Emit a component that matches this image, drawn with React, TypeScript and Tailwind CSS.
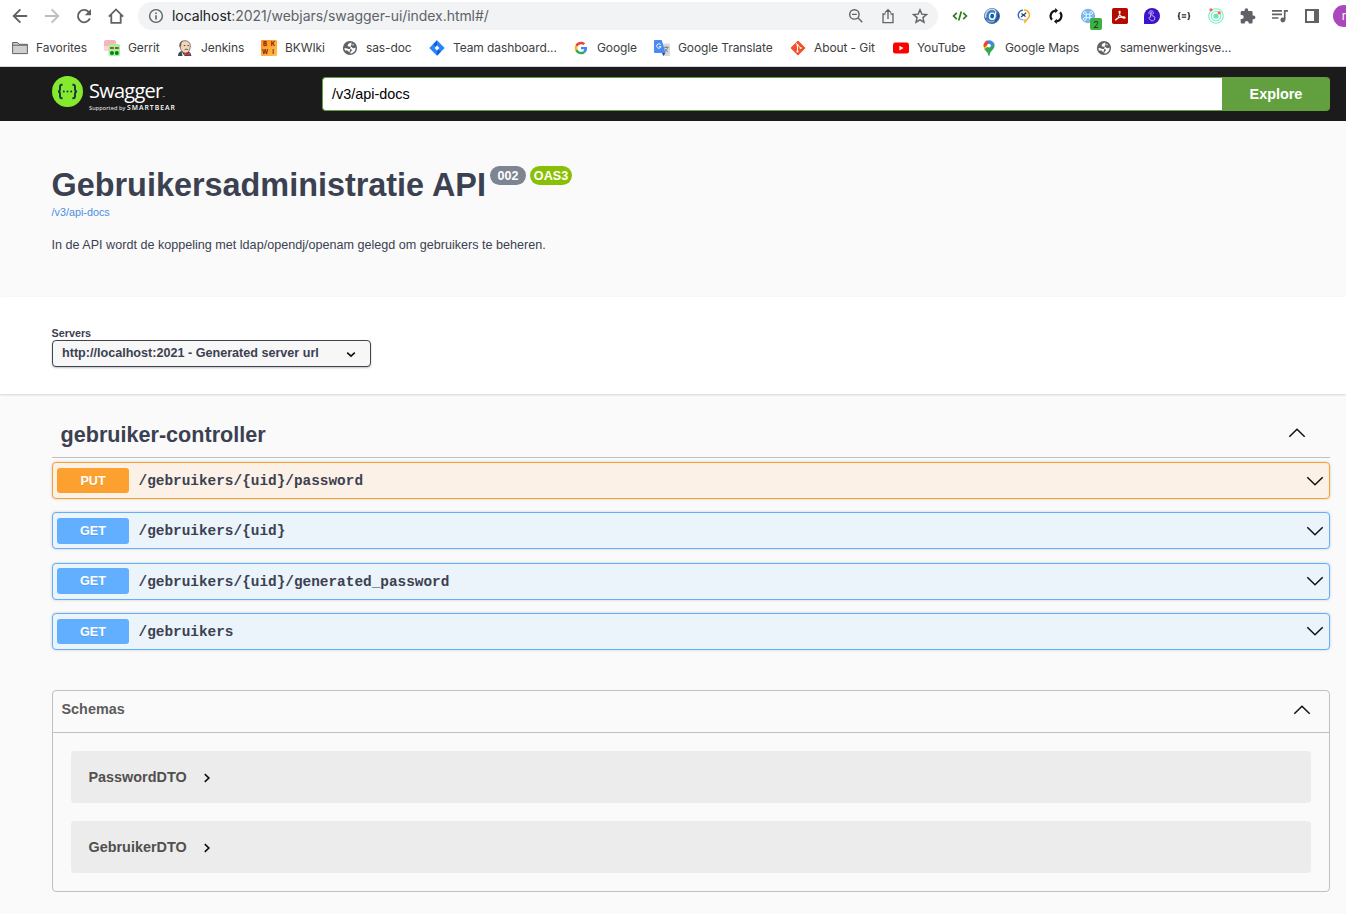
import type { ReactNode } from "react";

function Svg({ children, size = 16, vb = "0 0 16 16" }: { children: ReactNode; size?: number; vb?: string }) {
  return (
    <svg width={size} height={size} viewBox={vb} fill="none" className="block shrink-0">
      {children}
    </svg>
  );
}

const GRAY = "#5f6368";

const BackIcon = ({ color = GRAY }: { color?: string }) => (
  <Svg>
    <path d="M15.2 8H2M8.4 1.3 1.7 8l6.7 6.7" stroke={color} strokeWidth="1.9" />
  </Svg>
);
const ForwardIcon = () => (
  <Svg>
    <path d="M.8 8H14M7.6 1.3 14.3 8l-6.7 6.7" stroke="#bcbec0" strokeWidth="1.9" />
  </Svg>
);
const ReloadIcon = () => (
  <Svg>
    <path d="M13.9 10.4A6.2 6.2 0 1 1 12.6 3.8L14 5.4" stroke={GRAY} strokeWidth="1.9" />
    <path d="M15 1v6.3H8.8z" fill={GRAY} />
  </Svg>
);
const HomeIcon = () => (
  <Svg>
    <path d="M.8 8.6 8 1.4l7.2 7.2M3.3 7v7.9h9.4V7" stroke={GRAY} strokeWidth="1.8" />
  </Svg>
);
const InfoIcon = () => (
  <Svg>
    <circle cx="8" cy="8" r="6.4" stroke={GRAY} strokeWidth="1.4" />
    <path d="M8 7.2v4.2M8 4.5v1.5" stroke={GRAY} strokeWidth="1.6" />
  </Svg>
);
const ZoomOutIcon = () => (
  <Svg>
    <circle cx="6.4" cy="6.4" r="4.7" stroke={GRAY} strokeWidth="1.4" />
    <path d="M9.8 9.8 14.3 14.3M4 6.4h4.8" stroke={GRAY} strokeWidth="1.4" />
  </Svg>
);
const ShareIcon = () => (
  <Svg>
    <path d="M5.5 6H3v8.6h10V6h-2.5M8 11V1.8M5 4.6l3-3 3 3" stroke={GRAY} strokeWidth="1.3" />
  </Svg>
);
const StarIcon = () => (
  <Svg>
    <path d="m8 1.8 1.8 4.3 4.7.4-3.6 3.1 1.1 4.6L8 11.8l-4 2.4 1.1-4.6-3.6-3.1 4.7-.4z" stroke={GRAY} strokeWidth="1.4" />
  </Svg>
);

const CodeIcon = () => (
  <Svg>
    <path d="M4.8 4.8 1.6 8l3.2 3.2M11.2 4.8 14.4 8l-3.2 3.2M9.3 3.6 6.7 12.6" stroke="#2e7d12" strokeWidth="1.7" />
  </Svg>
);
const SwirlIcon = () => (
  <Svg>
    <circle cx="8" cy="8" r="7.5" fill="#3f7cc4" stroke="#3a5f8c" strokeWidth=".9" />
    <path d="M1.8 9.5A6.3 6.3 0 0 1 11.5 2.6" stroke="#c2dcf5" strokeWidth="1.6" />
    <path d="M14.2 5.5c.6 4-1.4 7.5-5 8.6" stroke="#1d4f8f" strokeWidth="1.6" />
    <ellipse cx="8.2" cy="8.2" rx="2.7" ry="3.1" fill="#1f5aa5" stroke="#fff" strokeWidth="1.4" />
    <path d="M11.8 3.2c-.2 3-.6 5-2.2 8" stroke="#f0f7fd" strokeWidth="1.2" />
    <path d="M3.4 12.4c2 1.8 5.2 1.8 7.4.2" stroke="#8fbce8" strokeWidth="1.1" />
  </Svg>
);
const QuoteIcon = () => (
  <Svg>
    <path d="M3.6 10.6A5 5 0 0 1 7 2.2" stroke="#2c62cc" strokeWidth="1.3" />
    <path d="M8 2a5 5 0 0 1 3.6 8.8L9 13.8l-.2-2.3" stroke="#f5ae2c" strokeWidth="1.5" />
    <path d="M3.6 10.6c1 1 2.2 1.3 4 1.2" stroke="#8aa6da" strokeWidth="1.2" />
    <path d="m5.4 5.4 4.2 3.2M10.2 4.8 5 9" stroke="#30465f" strokeWidth="1.2" />
  </Svg>
);
const SyncIcon = () => (
  <Svg>
    <path d="M7.6 2.6A5.5 5.5 0 0 0 4 11.8M8.4 13.4A5.5 5.5 0 0 0 12 4.2" stroke="#111" strokeWidth="2.1" />
    <path d="M7.2 0v5.2L10 2.6zM8.8 16v-5.2L6 13.4z" fill="#111" />
  </Svg>
);
const CommandIcon = () => (
  <div className="relative h-4 w-4">
    <Svg>
      <circle cx="8" cy="8" r="7.2" fill="#79b7ee" />
      <path d="M6.2 9.8V5a1.4 1.4 0 1 0-1.4 1.4h6.4A1.4 1.4 0 1 0 9.8 5v6a1.4 1.4 0 1 0 1.4-1.4H4.8A1.4 1.4 0 1 0 6.2 11z" stroke="#e8f4ff" strokeWidth="1" />
    </Svg>
    <div className="absolute left-[10px] top-[10px] flex h-3 w-3 items-center justify-center rounded-[2px] bg-[#3cb043] text-[9px] leading-none text-[#162b17]">
      2
    </div>
  </div>
);
const AcrobatIcon = () => (
  <Svg>
    <rect width="16" height="16" rx="1.8" fill="#b30b00" />
    <path d="M3.4 11.8c1.2 1 4.8-4.7 4.7-8 0-.8-1-.8-1 .1.1 2.8 3 6.4 5.3 6.3 1.3-.2.8-1.2-.6-1.3-2.6-.2-8 1.4-8.4 2.9z" stroke="#fff" strokeWidth="1.1" />
  </Svg>
);
const HandIcon = () => (
  <Svg>
    <path d="M8 0a8 8 0 1 1 0 16H0V8a8 8 0 0 1 8-8z" fill="#3d14c9" />
    <path d="M6.6 9.2V4.9c0-1 1.3-1 1.3 0v2.8l2.3.7c.6.3.8.7.6 1.4l-.5 2.2c-.9 1.1-3.2 1.1-4 0L5 10.2c-.3-.8.5-1.4 1.1-.8zM5.2 6.2A2.3 2.3 0 1 1 9.4 5.8" stroke="#c8bdfa" strokeWidth=".9" />
  </Svg>
);
const BracesIcon = () => (
  <Svg>
    <path d="M4.4 4.6H4c-.8 0-1 .4-1 1v1.3c0 .7-.4 1.1-1.2 1.1.8 0 1.2.4 1.2 1.1v1.3c0 .6.2 1 1 1h.4M11.6 4.6h.4c.8 0 1 .4 1 1v1.3c0 .7.4 1.1 1.2 1.1-.8 0-1.2.4-1.2 1.1v1.3c0 .6-.2 1-1 1h-.4" stroke="#222" strokeWidth="1.3" />
    <path d="M5.8 6.5h4.4M5.8 8h4.4M5.8 9.5h4.4" stroke="#444" strokeWidth=".9" />
  </Svg>
);
const OrbitIcon = () => (
  <Svg>
    <circle cx="8" cy="8" r="7.3" stroke="#79efc0" strokeWidth="1.1" />
    <circle cx="8" cy="8" r="4.8" stroke="#79efc0" strokeWidth="1.1" />
    <circle cx="8" cy="8" r="2.6" fill="#67e8b0" />
    <circle cx="3" cy="1.8" r="1.6" fill="#f2664b" />
    <circle cx="11.2" cy="4.8" r="1.6" fill="#f2664b" />
  </Svg>
);
const PuzzleIcon = () => (
  <Svg>
    <path d="M13.6 7.6h-1V4.4c0-.8-.6-1.3-1.3-1.3H8.2V2a1.8 1.8 0 0 0-3.6 0v1.1H2c-.7 0-1.3.5-1.3 1.3v2.7h1a2 2 0 0 1 0 4h-1v3.2c0 .7.6 1.3 1.3 1.3h2.8v-1a2 2 0 0 1 3.9 0v1h2.6c.7 0 1.3-.6 1.3-1.3v-3.1h1a1.8 1.8 0 0 0 0-3.6z" fill={GRAY} />
  </Svg>
);
const QueueIcon = () => (
  <Svg>
    <path d="M0 2.8h10M0 6.4h10M0 10h6.5M12.7 12V2.8H16" stroke={GRAY} strokeWidth="1.7" />
    <circle cx="10.8" cy="12" r="2.4" fill={GRAY} />
  </Svg>
);
const PanelIcon = () => (
  <Svg>
    <path d="M1 1h14v14H1z M3 3v10h7V3z" fill={GRAY} fillRule="evenodd" />
  </Svg>
);

const FolderIcon = () => (
  <Svg>
    <path d="M.6 13.6V2.5h5l1.5 1.8h8.3v9.3z" fill="#cfcfcf" stroke="#626262" strokeWidth="1" />
    <path d="M.6 5.2h14.8" stroke="#626262" strokeWidth="1" />
  </Svg>
);
const GerritIcon = () => (
  <Svg>
    <rect width="12" height="11" rx="2" fill="#f9b4b8" />
    <path d="M0 6h5v5H2a2 2 0 0 1-2-2z" fill="#fbd5d7" />
    <rect x="4.5" y="4" width="11.5" height="12" rx="1.8" fill="#9af79d" />
    <path d="M6 8h3.8M11 8h3.8" stroke="#d00" strokeWidth="1.7" />
    <circle cx="8" cy="13" r="2" fill="#107a16" />
    <circle cx="12.8" cy="13" r="2" fill="#107a16" />
  </Svg>
);
const JenkinsIcon = () => (
  <Svg>
    <path d="M1 16c0-3 1.6-4.6 4-5l6 .6c2 .6 3 2 3.4 4.4z" fill="#33475b" />
    <path d="M3 5C3 2 5 .7 8 .7s5.3 2 5.3 5-1 7-4.6 7.4C5.6 13.2 3 9.5 3 5z" fill="#eed7b9" stroke="#5d4b43" strokeWidth=".7" />
    <path d="M3 7.5C1.7 5 3 1 6.2.8 4.8 2 4.2 3 4.2 5.5z" fill="#6b5c55" />
    <path d="M6.8 5.6h1.6M10.5 5.6H12M7.6 9.8c1.2-.7 2.3-.7 3.6 0" stroke="#4d3935" strokeWidth=".9" />
    <path d="m7 12.6 2.4 1.2 3.6-1.4v3.4l-3.6-1-2.4 1.2z" fill="#d33833" />
    <path d="M4.6 11.6 7.5 16h-2z" fill="#fff" />
  </Svg>
);
const BkwiIcon = () => (
  <div className="grid h-4 w-4 shrink-0 grid-cols-2 overflow-hidden rounded-[1px] bg-linear-to-br from-[#ff8a1d] to-[#ffc24a] text-center text-[6px] leading-[8px] font-bold text-[#7a1f05]">
    <span>B</span>
    <span>K</span>
    <span>W</span>
    <span>I</span>
  </div>
);
const GlobeIcon = () => (
  <Svg>
    <circle cx="8" cy="8" r="7.1" fill={GRAY} />
    <path d="M9.6 2.6c-2.4.4-4.1 1.6-3.9 3 .2 1.3 1.8 1.2 3.2 1.2 1.3 0 1.1 1.5 2.4 1.5 1 0 1.3-.9 2.2-.9.4 3.2-1.8 5.6-5.2 6.2l.1-1.4c.1-.8 1.6-1 1.5-2 0-1.4-1.9-1.2-3.3-1.2-1.5 0-1.6-1.2-4.1-1 0 .9.2 1.7.5 2.4h2.4c.9 0 .6 1.2 1.3 1.4.5.2.7.6.6 1.2" fill="#fff" />
    <path d="M9.4 4.3c.4.8 1.4.6 2.6.2" stroke="#fff" strokeWidth=".8" />
  </Svg>
);
const JiraIcon = () => (
  <Svg>
    <path d="M8 .3 15.7 8 8 15.7.3 8z" fill="#2684ff" />
    <path d="M8 .3 4.2 4.2 8 8V5.4zM8 15.7l3.8-3.9L8 8v2.6z" fill="#1260d8" />
    <path d="M8 5.6 10.4 8 8 10.4 5.6 8z" fill="#fff" />
  </Svg>
);
const GoogleIcon = () => (
  <Svg vb="0 0 48 48">
    <g transform="translate(5 5) scale(.79)">
      <path fill="#EA4335" d="M24 9.5c3.54 0 6.71 1.22 9.21 3.6l6.85-6.85C35.9 2.38 30.47 0 24 0 14.62 0 6.51 5.38 2.56 13.22l7.98 6.19C12.43 13.72 17.74 9.5 24 9.5z" />
      <path fill="#4285F4" d="M46.98 24.55c0-1.57-.15-3.09-.38-4.55H24v9.02h12.94c-.58 2.96-2.26 5.48-4.78 7.18l7.73 6c4.51-4.18 7.09-10.36 7.09-17.65z" />
      <path fill="#FBBC05" d="M10.53 28.59c-.48-1.45-.76-2.99-.76-4.59s.27-3.14.76-4.59l-7.98-6.19C.92 16.46 0 20.12 0 24c0 3.88.92 7.54 2.56 10.78l7.97-6.19z" />
      <path fill="#34A853" d="M24 48c6.48 0 11.93-2.13 15.89-5.81l-7.73-6c-2.15 1.45-4.92 2.3-8.16 2.3-6.26 0-11.57-4.22-13.47-9.91l-7.98 6.19C6.51 42.62 14.62 48 24 48z" />
    </g>
  </Svg>
);
const TranslateIcon = () => (
  <Svg>
    <path d="M5 3.6h10q1 0 1 1V15q0 1-1 1H9.5z" fill="#d8dadd" />
    <path d="M9.8 7.3h5M12.3 6.3v1M10.4 12c2-1.2 3-2.8 3.1-4.6M10.8 8.7c.7 1.4 1.7 2.5 3.1 3.3" stroke="#70767b" strokeWidth=".9" />
    <path d="M8 13h3.5L9.3 16z" fill="#2545a8" />
    <path d="M1 0h6.7l3.8 13H1q-1 0-1-1V1q0-1 1-1z" fill="#4a8af4" />
    <path d="M6.8 4.9A2.2 2.2 0 1 0 7 6.7H5" stroke="#fff" strokeWidth="1" />
  </Svg>
);
const GitIcon = () => (
  <Svg>
    <rect x="2.6" y="2.6" width="10.8" height="10.8" rx=".8" transform="rotate(45 8 8)" fill="#f4502a" />
    <path d="M5.8 2.8 7.5 4.6v7M7.6 5l2.8 2.8" stroke="#fff" strokeWidth="1" />
    <circle cx="7.5" cy="5" r="1.1" fill="#fff" />
    <circle cx="7.5" cy="11.5" r="1.1" fill="#fff" />
    <circle cx="10.6" cy="8" r="1.1" fill="#fff" />
  </Svg>
);
const YoutubeIcon = () => (
  <Svg>
    <rect y="2.6" width="16" height="11" rx="2.4" fill="#f00" />
    <path d="m6.4 5.8 4.1 2.3-4.1 2.3z" fill="#fff" />
  </Svg>
);
const MapsIcon = () => (
  <Svg>
    <path d="M3.2 9C4.6 11.4 7 12 7.3 15.2c.1 1 1.1 1 1.3 0C8.9 12 11 11 12.8 8.3A5.8 5.8 0 0 0 13 3L3 9z" fill="#34a853" />
    <path d="M2.5 5.6c0 1.6.4 2.7 1.2 4L8 4.5 4 2.2a5.7 5.7 0 0 0-1.5 3.4z" fill="#fbbc04" />
    <path d="M2.5 5.6c0-1.3.5-2.5 1.4-3.4L6.7 4.4 3.2 7.2z" fill="#ea4335" />
    <path d="M3.9 2.2A5.6 5.6 0 0 1 8 .2l1.6.2c1.8.6 3 1.8 3.7 3.4L9.5 7.6 6.7 4.4z" fill="#4285f4" />
    <path d="M3.9 2.2A5.6 5.6 0 0 1 6 .6l1.7 2.6-1.4 1.5z" fill="#ea4335" />
    <circle cx="8" cy="5.6" r="1.9" fill="#fff" />
  </Svg>
);

const bookmarks = [
  { label: "Favorites", icon: <FolderIcon />, cls: "w-[92px]" },
  { label: "Gerrit", icon: <GerritIcon />, cls: "w-[73px]" },
  { label: "Jenkins", icon: <JenkinsIcon />, cls: "w-[84px]" },
  { label: "BKWIki", icon: <BkwiIcon />, cls: "w-[81px]" },
  { label: "sas-doc", icon: <GlobeIcon />, cls: "w-[87px]" },
  { label: "Team dashboard...", icon: <JiraIcon />, cls: "w-[144px]" },
  { label: "Google", icon: <GoogleIcon />, cls: "w-[81px]" },
  { label: "Google Translate", icon: <TranslateIcon />, cls: "w-[136px]" },
  { label: "About - Git", icon: <GitIcon />, cls: "w-[103px]" },
  { label: "YouTube", icon: <YoutubeIcon />, cls: "w-[88px]" },
  { label: "Google Maps", icon: <MapsIcon />, cls: "w-[115px]" },
  { label: "samenwerkingsve...", icon: <GlobeIcon />, cls: "w-[140px]" },
];

function BrowserChrome() {
  return (
    <header className="h-[67px] overflow-hidden border-b border-[#d5d7da] bg-white font-['Inter',sans-serif]">
      <div className="flex h-8 items-center pl-3">
        <div className="flex w-[126px] shrink-0 gap-4">
          <BackIcon />
          <ForwardIcon />
          <ReloadIcon />
          <HomeIcon />
        </div>
        <div className="flex h-7 w-[800px] shrink-0 items-center rounded-full bg-[#f1f3f4] pr-[10px] pl-[10px]">
          <InfoIcon />
          <span className="ml-2 flex-1 text-[14px] leading-5 tracking-[-0.06px] whitespace-nowrap text-[#5f6368]">
            <span className="text-[#202124]">localhost</span>:2021/webjars/swagger-ui/index.html#/
          </span>
          <div className="flex gap-4">
            <ZoomOutIcon />
            <ShareIcon />
            <StarIcon />
          </div>
        </div>
        <div className="ml-[14px] flex shrink-0 items-center gap-4">
          <CodeIcon />
          <SwirlIcon />
          <QuoteIcon />
          <SyncIcon />
          <CommandIcon />
          <AcrobatIcon />
          <HandIcon />
          <BracesIcon />
          <OrbitIcon />
          <PuzzleIcon />
          <QueueIcon />
          <PanelIcon />
        </div>
        <div className="ml-[13px] flex h-[22px] w-[22px] shrink-0 items-center justify-center rounded-full bg-[#ab47bc] text-[12px] text-white">
          r
        </div>
      </div>
      <nav className="flex h-8 items-center pl-3">
        {bookmarks.map((b) => (
          <div key={b.label} className={`flex shrink-0 items-center gap-2 ${b.cls}`}>
            {b.icon}
            <span className="text-[12px] leading-4 tracking-[-0.1px] whitespace-nowrap text-[#3c4043]">{b.label}</span>
          </div>
        ))}
      </nav>
    </header>
  );
}

function SwaggerLogo() {
  return (
    <div className="flex w-[270px] shrink-0 items-start pt-[9px]">
      <svg width="31" height="31" viewBox="0 0 31 31" fill="none" className="shrink-0">
        <circle cx="15.5" cy="15.5" r="15.5" fill="#85ea2d" />
        <path d="M10.6 8.8H9.8c-1.4 0-1.8.8-1.8 2v2.4c0 1.4-.5 2.1-1.8 2.3 1.3.2 1.8.9 1.8 2.3v2.4c0 1.2.4 2 1.8 2h.8M20.4 8.8h.8c1.4 0 1.8.8 1.8 2v2.4c0 1.4.5 2.1 1.8 2.3-1.3.2-1.8.9-1.8 2.3v2.4c0 1.2-.4 2-1.8 2h-.8" stroke="#173647" strokeWidth="1.9" />
        <circle cx="11.8" cy="15.5" r="1" fill="#173647" />
        <circle cx="15.5" cy="15.5" r="1" fill="#173647" />
        <circle cx="19.2" cy="15.5" r="1" fill="#173647" />
      </svg>
      <div className="ml-[6px] pt-[3px] text-white">
        <div className="flex items-end font-['Open_Sans',sans-serif] text-[20px] leading-[24px] font-normal tracking-[-0.75px]">
          Swagger<span className="text-[3px] leading-[12px] tracking-normal">™</span>
        </div>
        <div className="flex items-center gap-[3px] pt-[1px] font-['Open_Sans',sans-serif] leading-[8px] whitespace-nowrap">
          <span className="w-[35px] text-[5.6px] tracking-[0.1px]">Supported by</span>
          <span className="text-[6.8px] font-semibold tracking-[1px]">SMARTBEAR</span>
        </div>
      </div>
    </div>
  );
}

function Chevron({ up = false }: { up?: boolean }) {
  return (
    <svg width="18" height="10" viewBox="0 0 18 10" fill="none" className="block shrink-0">
      <path d={up ? "M1.3 8.8 9 1.2l7.7 7.6" : "M1.3 1.2 9 8.8l7.7-7.6"} stroke="#111" strokeWidth="1.5" />
    </svg>
  );
}

const operations = [
  { method: "PUT", path: "/gebruikers/{uid}/password", row: "border-[#fca130] bg-[#fbf1e6]", badge: "mt-[5px] h-[25px] pt-[1px] bg-[#fca130]", arrow: "pt-[1px]" },
  { method: "GET", path: "/gebruikers/{uid}", row: "mt-[13px] border-[#61affe] bg-[#ebf3fb]", badge: "mt-[5px] h-[26px] bg-[#61affe]", arrow: "pt-[1px]" },
  { method: "GET", path: "/gebruikers/{uid}/generated_password", row: "mt-[14px] border-[#61affe] bg-[#ebf3fb]", badge: "mt-1 h-[26px] pt-[1px] bg-[#61affe]", arrow: "pb-[1px]" },
  { method: "GET", path: "/gebruikers", row: "mt-[13px] border-[#61affe] bg-[#ebf3fb]", badge: "mt-[5px] h-[25px] pt-[1px] bg-[#61affe]", arrow: "pb-[1px]" },
];

const schemas = ["PasswordDTO", "GebruikerDTO"];

export default function App() {
  return (
    <div className="h-[914px] overflow-hidden bg-[#fafafa] font-['Liberation_Sans',Arial,sans-serif] text-[#3b4151]">
      <BrowserChrome />

      <div className="flex h-[54px] bg-[#1b1b1b] pl-[52px]">
        <SwaggerLogo />
        <div className="mt-[10px] flex h-[34px] w-[1008px] shrink-0">
          <div className="flex w-[900px] shrink-0 items-center rounded-l-[4px] border border-r-0 border-[#62a03f] bg-white pt-[2px] pl-[9px] text-[14.4px] text-black">
            /v3/api-docs
          </div>
          <button className="w-[108px] rounded-r-[4px] bg-[#62a03f] pt-[2px] text-[14.4px] font-bold text-white">Explore</button>
        </div>
      </div>

      <section className="h-[176px] pt-[44px] pl-[51.5px]">
        <div className="flex items-start">
          <h1 className="w-[434.5px] text-[32.4px] leading-[40px] font-bold whitespace-nowrap">Gebruikersadministratie API</h1>
          <span className="mt-[1px] ml-1 flex h-[19px] w-9 items-center justify-center rounded-full bg-[#7d8492] pt-[1px] text-[12.6px] font-bold text-white">
            002
          </span>
          <span className="mt-[1px] ml-1 flex h-[19px] w-[42px] items-center justify-center rounded-full bg-[#89bf04] pt-[1px] text-[12.6px] font-bold text-white">
            OAS3
          </span>
        </div>
        <div className="text-[10.8px] leading-[14px] text-[#4990e2]">/v3/api-docs</div>
        <p className="mt-[17px] text-[12.6px] leading-[18px]">
          In de API wordt de koppeling met ldap/opendj/openam gelegd om gebruikers te beheren.
        </p>
      </section>

      <section className="h-[97px] bg-white pt-[29px] pl-[52px] shadow-[0_1px_2px_0_rgba(0,0,0,0.15)]">
        <div className="-ml-[0.5px] text-[10.8px] leading-[14px] font-bold">Servers</div>
        <div className="flex h-[27px] w-[319px] items-center justify-between rounded-[4px] border border-[#41444e] bg-[#f7f7f7] pr-[14px] pl-[9px] shadow-[0_1px_2px_0_rgba(0,0,0,0.25)]">
          <span className="pb-[1px] text-[12.6px] font-bold">http://localhost:2021 - Generated server url</span>
          <svg width="10" height="7" viewBox="0 0 10 7" fill="none" className="mt-[2px]">
            <path d="M1.2 1.6 5 5.2l3.8-3.6" stroke="#111" strokeWidth="1.6" />
          </svg>
        </div>
      </section>

      <main className="pr-4 pl-[52px]">
        <div className="flex h-[64px] items-center justify-between border-b border-[#c0c0c2] pt-[15px] pr-6 pl-[8.5px]">
          <h3 className="pt-[3px] text-[21.6px] leading-7 font-bold">gebruiker-controller</h3>
          <Chevron up />
        </div>
        <div className="pt-1">
          {operations.map((o) => (
            <div key={o.path} className={`flex h-[37px] rounded-[4px] border pr-[5px] pl-1 shadow-[0_0_3px_rgba(0,0,0,0.19)] ${o.row}`}>
              <div className={`flex w-[72px] items-center justify-center rounded-[3px] text-[12.6px] font-bold text-white [text-shadow:0_1px_0_rgba(0,0,0,0.1)] ${o.badge}`}>
                {o.method}
              </div>
              <div className="flex flex-1 items-center pt-[2px] pl-[9.5px] font-['Liberation_Mono',monospace] text-[14.4px] font-bold">
                {o.path}
              </div>
              <div className={`flex items-center ${o.arrow}`}>
                <Chevron />
              </div>
            </div>
          ))}
        </div>

        <section className="mt-10 h-[202px] rounded-[4px] border border-[#bfc0c4]">
          <div className="flex h-[42px] items-center justify-between border-b border-[#bfc0c4] pr-[18px] pl-[8.5px]">
            <h4 className="pb-1 text-[14.4px] font-bold text-[#5c5c5c]">Schemas</h4>
            <div className="pb-[4px]">
              <Chevron up />
            </div>
          </div>
          <div className="flex flex-col gap-[18px] px-[18px] pt-[18px]">
            {schemas.map((s) => (
              <div key={s} className="flex h-[52px] items-center rounded-[4px] bg-[#ececec] pl-[17.5px]">
                <span className="pt-[2px] text-[14.4px] font-bold text-[#505050]">{s}</span>
                <svg width="8" height="10" viewBox="0 0 8 10" fill="none" className="mt-[2px] ml-4">
                  <path d="m1.8 1.2 4 3.8-4 3.8" stroke="#111" strokeWidth="1.7" />
                </svg>
              </div>
            ))}
          </div>
        </section>
      </main>
    </div>
  );
}
